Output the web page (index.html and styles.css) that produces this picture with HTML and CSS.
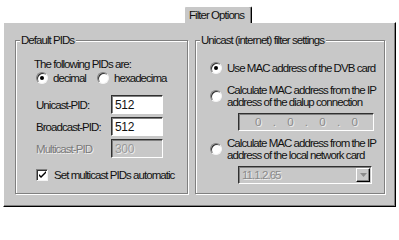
FILE: index.html
```html
<!DOCTYPE html>
<html>
<head>
<meta charset="utf-8">
<link rel="stylesheet" href="styles.css">
</head>
<body>
<div class="dialog">
  <div class="tabrow">
    <div class="tab">Filter Options</div>
  </div>
  <div class="panel">
    <fieldset class="group left">
      <legend>Default PIDs</legend>
      <div class="content">
        <div class="line intro">The following PIDs are:</div>
        <div class="radios">
          <div class="opt"><span class="radio on"></span><span>decimal</span></div>
          <div class="opt"><span class="radio"></span><span>hexadecima</span></div>
        </div>
        <div class="field first"><span class="flabel">Unicast-PID:</span><span class="edit">512</span></div>
        <div class="field"><span class="flabel">Broadcast-PID:</span><span class="edit">512</span></div>
        <div class="field"><span class="flabel dis">Multicast-PID</span><span class="edit disabled">300</span></div>
        <div class="check"><span class="box"><svg width="9" height="9" viewBox="0 0 9 9"><path d="M1 4 L3 6 L8 1 L8 3 L3 8 L1 6 Z" fill="#000"/></svg></span><span>Set multicast PIDs automatic</span></div>
      </div>
    </fieldset>
    <fieldset class="group right">
      <legend>Unicast (internet) filter settings</legend>
      <div class="content">
        <div class="ropt one"><span class="radio on"></span><span>Use MAC address of the DVB card</span></div>
        <div class="ropt two"><span class="radio"></span><span>Calculate MAC address from the IP<br>address of the dialup connection</span></div>
        <div class="ipbox"><span>0</span><span>.</span><span>0</span><span>.</span><span>0</span><span>.</span><span>0</span></div>
        <div class="ropt three"><span class="radio"></span><span>Calculate MAC address from the IP<br>address of the local network card</span></div>
        <div class="combo"><span class="ctext">11.1.2.65</span><span class="cbtn"><svg width="7" height="4" viewBox="0 0 7 4"><path d="M0 0 H7 L3.5 4 Z" fill="#8a8a8a"/></svg></span></div>
      </div>
    </fieldset>
  </div>
</div>
</body>
</html>
```
FILE: styles.css
```css
html, body {
  margin: 0;
  padding: 0;
  background: #ffffff;
}
body {
  width: 399px;
  height: 214px;
  overflow: hidden;
  font-family: "Liberation Sans", Arial, sans-serif;
  font-size: 11.5px;
  letter-spacing: -0.95px;
  color: #111;
}
.dialog {
  padding-left: 3px;
}
.tabrow {
  height: 22px;
  display: flex;
  align-items: flex-end;
  padding-left: 181px;
}
.tab {
  position: relative;
  z-index: 2;
  width: 68px;
  height: 17px;
  box-sizing: border-box;
  margin-bottom: -1px;
  background: #c8c8c8;
  border-top: 1px solid #fff;
  border-left: 1px solid #fff;
  border-right: 1px solid #000;
  box-shadow: inset -1px 0 0 #808080;
  padding-left: 4px;
  line-height: 16px;
  border-radius: 2px 2px 0 0;
}
.panel {
  background: #c8c8c8;
  border-top: 1px solid #fff;
  border-left: 1px solid #fff;
  border-right: 1px solid #000;
  border-bottom: 1px solid #000;
  box-shadow: inset -1px -1px 0 #808080;
  display: flex;
  gap: 7px;
  padding: 11px 0 0 11px;
  box-sizing: border-box;
  width: 393px;
  height: 185px;
}
.group {
  margin: 0;
  padding: 0;
  min-width: 0;
  border: 1px solid #808080;
  box-shadow: 1px 1px 0 #fff, inset 1px 1px 0 #fff;
  box-sizing: border-box;
  height: 160px;
}
.group legend {
  padding: 0 2px 0 1px;
  margin-left: 4px;
  line-height: 13px;
  background: #c8c8c8;
  position: relative;
  z-index: 1;
}
.left {
  width: 173px;
}
.right {
  width: 190px;
}
.left .content {
  padding-left: 18px;
}
.right .content {
  padding-left: 14px;
}
.line {
  height: 13px;
  line-height: 13px;
}
.intro {
  margin-top: 11px;
}
.radios {
  display: flex;
  gap: 6px;
  height: 12px;
  margin-top: 1px;
  padding-left: 2px;
}
.opt, .ropt {
  display: flex;
  align-items: center;
  gap: 5px;
  line-height: 12px;
}
.opt:first-child {
  width: 55px;
}
.radio {
  width: 10px;
  height: 10px;
  border-radius: 50%;
  background: #fff;
  border: 1px solid;
  border-color: #808080 #f4f4f4 #f4f4f4 #808080;
  box-shadow: inset 1px 1px 0 #303030;
  display: flex;
  align-items: center;
  justify-content: center;
  flex: none;
}
.radio.on::after {
  content: "";
  width: 4px;
  height: 4px;
  border-radius: 50%;
  background: #000;
}
.field {
  display: flex;
  align-items: center;
  height: 19px;
  margin-top: 3px;
  padding-left: 2px;
}
.field.first {
  margin-top: 11px;
}
.flabel {
  width: 75px;
}
.dis {
  color: #7a7a7a;
  text-shadow: 1px 1px 0 #eee;
}
.edit {
  width: 52px;
  height: 19px;
  box-sizing: border-box;
  background: #fff;
  border-top: 1px solid #303030;
  border-left: 1px solid #303030;
  border-right: 1px solid #fff;
  border-bottom: 1px solid #fff;
  box-shadow: inset 1px 1px 0 #808080;
  padding: 2px 0 0 3px;
  line-height: 14px;
  font-size: 12px;
  letter-spacing: -0.3px;
}
.edit.disabled {
  background: #c8c8c8;
  color: #999;
  text-shadow: 1px 1px 0 #eee;
}
.check {
  display: flex;
  align-items: center;
  gap: 6px;
  height: 13px;
  margin-top: 10px;
  padding-left: 2px;
}
.box {
  width: 10px;
  height: 10px;
  background: #fff;
  border: 1px solid;
  border-color: #808080 #f4f4f4 #f4f4f4 #808080;
  box-shadow: inset 1px 1px 0 #303030;
  display: flex;
  align-items: center;
  justify-content: center;
}
.ropt.one {
  margin-top: 15px;
  height: 12px;
}
.ropt.two {
  margin-top: 10px;
  height: 24px;
}
.ropt.three {
  margin-top: 6px;
  height: 24px;
}
.ipbox {
  margin: 5px 0 0 28px;
  width: 136px;
  height: 18px;
  box-sizing: border-box;
  border-top: 1px solid #303030;
  border-left: 1px solid #303030;
  border-right: 1px solid #fff;
  border-bottom: 1px solid #fff;
  box-shadow: inset 1px 1px 0 #808080;
  display: flex;
  justify-content: space-around;
  align-items: center;
  padding: 0 10px;
  color: #8a8a8a;
  text-shadow: 1px 1px 0 #eee;
}
.combo {
  margin: 5px 0 0 28px;
  width: 134px;
  height: 18px;
  box-sizing: border-box;
  border-top: 1px solid #303030;
  border-left: 1px solid #303030;
  border-right: 1px solid #fff;
  border-bottom: 1px solid #fff;
  box-shadow: inset 1px 1px 0 #808080;
  display: flex;
  align-items: center;
  justify-content: space-between;
  padding-left: 3px;
  color: #8a8a8a;
  text-shadow: 1px 1px 0 #eee;
}
.cbtn {
  width: 14px;
  height: 14px;
  box-sizing: border-box;
  margin-right: 1px;
  background: #c8c8c8;
  border-top: 1px solid #fff;
  border-left: 1px solid #fff;
  border-right: 1px solid #000;
  border-bottom: 1px solid #000;
  box-shadow: inset -1px -1px 0 #808080;
  display: flex;
  align-items: center;
  justify-content: center;
}
```
